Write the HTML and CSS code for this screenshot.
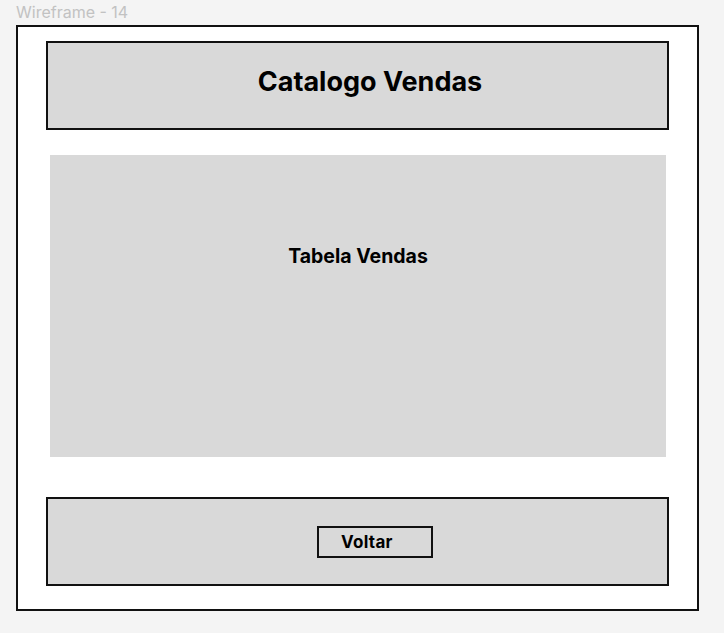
FILE: index.html
```html
<!DOCTYPE html>
<html lang="pt">
<head>
<meta charset="utf-8">
<title>Wireframe - 14</title>
<link rel="stylesheet" href="styles.css">
</head>
<body>
<div class="label">Wireframe - 14</div>
<div class="frame">
  <header class="header"><h1 class="title">Catalogo Vendas</h1></header>
  <section class="table"><span class="table-label">Tabela Vendas</span></section>
  <footer class="footer"><button class="btn">Voltar</button></footer>
</div>
</body>
</html>
```
FILE: styles.css
```css
html, body { margin: 0; padding: 0; }
body {
  background: #f4f4f4;
  font-family: Inter, "Noto Sans", sans-serif;
  width: 724px;
  height: 633px;
  overflow: hidden;
}
.label {
  margin: 2px 0 0 16px;
  height: 23px;
  font-size: 16px;
  line-height: 20px;
  color: #c2c2c2;
}
.frame {
  margin-left: 16px;
  width: 679px;
  height: 568px;
  border: 2px solid #111;
  background: #fff;
  box-sizing: content-box;
  padding-top: 14px;
}
.header {
  margin-left: 28px;
  width: 594px;
  height: 77px;
  border: 2px solid #111;
  background: #d9d9d9;
  display: flex;
  align-items: center;
  justify-content: center;
  padding: 0 0 8px 25px;
  box-sizing: content-box;
}
.title {
  margin: 0;
  font-size: 27px;
  font-weight: 700;
  color: #000;
  line-height: 30px;
}
.table {
  margin: 25px 0 0 32px;
  width: 616px;
  height: 302px;
  background: #d9d9d9;
  display: flex;
  justify-content: center;
  padding-top: 89px;
  box-sizing: border-box;
}
.table-label {
  font-size: 19.5px;
  font-weight: 700;
  line-height: 24px;
  color: #000;
}
.footer {
  margin: 40px 0 0 28px;
  width: 350px;
  height: 85px;
  border: 2px solid #111;
  background: #d9d9d9;
  display: flex;
  align-items: center;
  padding-left: 269px;
  box-sizing: content-box;
}
.btn {
  width: 116px;
  height: 32px;
  border: 2px solid #111;
  background: #d9d9d9;
  font-family: Inter, "Noto Sans", sans-serif;
  font-size: 17px;
  letter-spacing: 0.3px;
  font-weight: 700;
  color: #000;
  text-align: left;
  padding: 0 0 0 22px;
  box-sizing: border-box;
}
```
